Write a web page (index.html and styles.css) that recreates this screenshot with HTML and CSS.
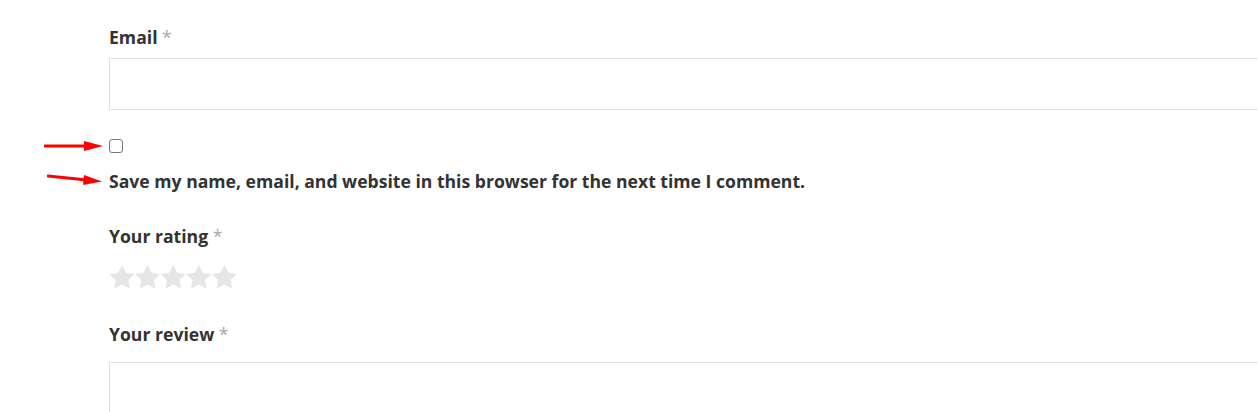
FILE: index.html
```html
<!DOCTYPE html>
<html lang="en">
<head>
<meta charset="utf-8">
<title>Review form</title>
<link rel="stylesheet" href="styles.css">
</head>
<body>
<form class="form">
  <div class="field">
    <label class="label">Email <span class="req">*</span></label>
    <div class="input"></div>
  </div>
  <div class="cookies">
    <span class="checkbox"></span>
    <label class="label cookies-text">Save my name, email, and website in this browser for the next time I comment.</label>
  </div>
  <div class="field rating">
    <label class="label">Your rating <span class="req">*</span></label>
    <div class="stars">
      <svg width="130" height="26" viewBox="0 0 130 26" aria-hidden="true">
        <defs>
          <polygon id="star" points="13,0.8 16.88,8.66 25.55,9.92 19.28,16.04 20.76,24.68 13,20.6 5.24,24.68 6.72,16.04 0.45,9.92 9.12,8.66"/>
        </defs>
        <g fill="#e6e6e6">
          <use href="#star"/>
          <use href="#star" x="25.6"/>
          <use href="#star" x="51.2"/>
          <use href="#star" x="76.8"/>
          <use href="#star" x="102.4"/>
        </g>
      </svg>
    </div>
  </div>
  <div class="field review">
    <label class="label">Your review <span class="req">*</span></label>
    <div class="textarea"></div>
  </div>
</form>
<svg class="arrow arrow-1" width="62" height="14" viewBox="0 0 62 14" aria-hidden="true">
  <line x1="1" y1="7" x2="44" y2="7" stroke="#ff0000" stroke-width="3" stroke-linecap="round"/>
  <polygon points="40,2 59,7 40,12" fill="#ff0000"/>
</svg>
<svg class="arrow arrow-2" width="58" height="16" viewBox="0 0 58 16" aria-hidden="true">
  <line x1="1" y1="4" x2="40" y2="8" stroke="#ff0000" stroke-width="3" stroke-linecap="round"/>
  <polygon points="37,3 55,9.5 36,13" fill="#ff0000"/>
</svg>
</body>
</html>
```
FILE: styles.css
```css
html, body {
  margin: 0;
  padding: 0;
  background: #fff;
  overflow: hidden;
}
body {
  font-family: "Open Sans", "Liberation Sans", sans-serif;
  color: #333;
  position: relative;
  width: 1257px;
  height: 412px;
}
.form {
  padding: 25px 0 0 109px;
}
.label {
  display: block;
  font-size: 17.6px;
  font-weight: 700;
  line-height: 24px;
  color: #333;
  white-space: nowrap;
}
.req {
  color: #a9a9a9;
  font-weight: 400;
}
.input {
  margin-top: 9px;
  width: 1148px;
  height: 52px;
  box-sizing: border-box;
  border: 1px solid #dddddd;
  border-right: none;
}
.cookies {
  margin-top: 29px;
}
.checkbox {
  display: block;
  width: 14px;
  height: 14px;
  box-sizing: border-box;
  border: 1px solid #777;
  border-radius: 3px;
}
.cookies-text {
  margin-top: 16px;
}
.rating {
  margin-top: 31px;
}
.stars {
  margin-top: 16px;
  height: 26px;
  line-height: 0;
}
.review {
  margin-top: 32px;
}
.textarea {
  margin-top: 16px;
  width: 1148px;
  height: 50px;
  box-sizing: border-box;
  border: 1px solid #dddddd;
  border-right: none;
  border-bottom: none;
}
.arrow {
  position: absolute;
}
.arrow-1 {
  left: 44px;
  top: 139px;
}
.arrow-2 {
  left: 47px;
  top: 172px;
}
```
